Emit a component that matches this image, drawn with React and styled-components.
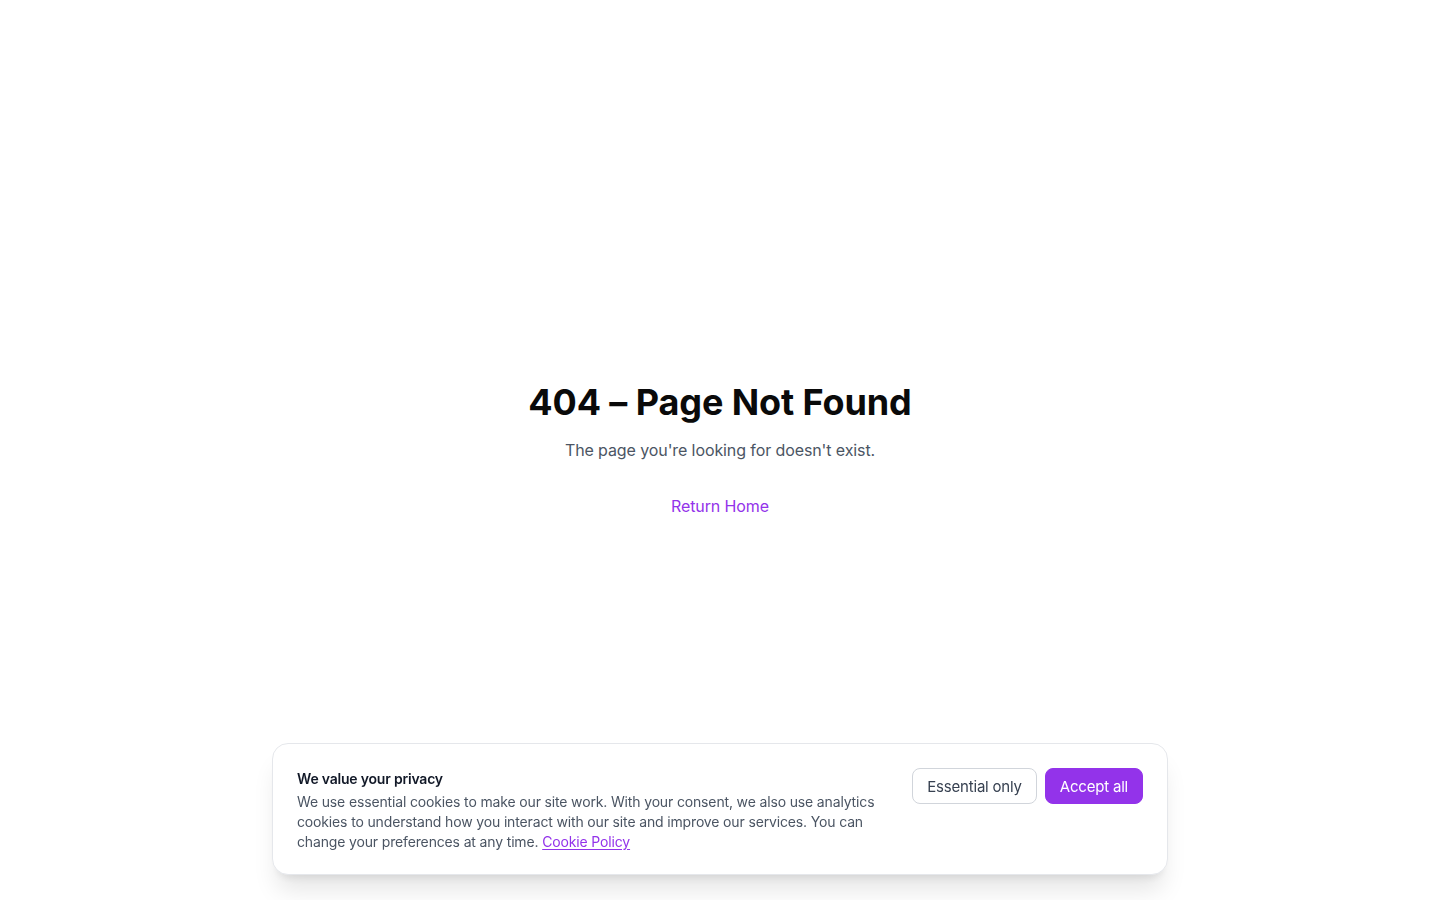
import React from 'react';
import styled, { createGlobalStyle } from 'styled-components';

const GlobalStyle = createGlobalStyle`
    html, body {
        margin: 0;
        padding: 0;
        background: #fff;
        font-family: 'Inter', 'Liberation Sans', sans-serif;
        -webkit-font-smoothing: antialiased;
    }
    * {
        box-sizing: border-box;
    }
`;

const Main = styled.main`
    min-height: 100vh;
    display: flex;
    flex-direction: column;
    align-items: center;
    justify-content: center;
    text-align: center;
    padding: 0 16px;
`;

const Title = styled.h1`
    margin: 0 0 16px;
    font-size: 36px;
    line-height: 40px;
    font-weight: 700;
    letter-spacing: -0.1px;
    color: #0a0a0a;
`;

const Subtitle = styled.p`
    margin: 0 0 32px;
    font-size: 16px;
    line-height: 24px;
    color: #4b5563;
    letter-spacing: -0.1px;
`;

const HomeLink = styled.a`
    font-size: 16px;
    line-height: 24px;
    color: #9333ea;
    text-decoration: none;
    letter-spacing: -0.1px;
`;

const Banner = styled.div`
    position: fixed;
    left: 50%;
    bottom: 25px;
    transform: translateX(-50%);
    width: 896px;
    background: #fff;
    border: 1px solid #e5e7eb;
    border-radius: 16px;
    box-shadow: 0 20px 25px -5px rgba(0, 0, 0, 0.1), 0 8px 10px -6px rgba(0, 0, 0, 0.1);
    padding: 24px;
    display: flex;
    align-items: flex-start;
    gap: 32px;
`;

const BannerText = styled.div`
    flex: 1;
    text-align: left;
`;

const BannerTitle = styled.h2`
    margin: 1px 0 3px;
    font-size: 14px;
    line-height: 20px;
    font-weight: 600;
    color: #111827;
    letter-spacing: -0.2px;
`;

const BannerBody = styled.p`
    margin: 0 0 -2px;
    font-size: 14px;
    line-height: 20px;
    color: #4b5563;
    letter-spacing: -0.15px;
`;

const PolicyLink = styled.a`
    color: #9333ea;
    text-decoration: underline;
    text-underline-offset: 2px;
`;

const Actions = styled.div`
    display: flex;
    gap: 8px;
    flex-shrink: 0;
`;

const Button = styled.button`
    height: 36px;
    padding: 0 14px;
    border-radius: 8px;
    font-family: inherit;
    font-size: 15px;
    letter-spacing: -0.2px;
    cursor: pointer;
    border: 1px solid ${p => (p.$primary ? '#9333ea' : '#d1d5db')};
    background: ${p => (p.$primary ? '#9333ea' : '#fff')};
    color: ${p => (p.$primary ? '#fff' : '#374151')};
`;

export default function App() {
    return (
        <>
            <GlobalStyle />
            <Main>
                <Title>404 – Page Not Found</Title>
                <Subtitle>The page you're looking for doesn't exist.</Subtitle>
                <HomeLink href="#">Return Home</HomeLink>
            </Main>
            <Banner>
                <BannerText>
                    <BannerTitle>We value your privacy</BannerTitle>
                    <BannerBody>
                        We use essential cookies to make our site work. With your consent, we also use analytics
                        cookies to understand how you interact with our site and improve our services. You can
                        change your preferences at any time.{' '}
                        <PolicyLink href="#">Cookie Policy</PolicyLink>
                    </BannerBody>
                </BannerText>
                <Actions>
                    <Button>Essential only</Button>
                    <Button $primary>Accept all</Button>
                </Actions>
            </Banner>
        </>
    );
}
